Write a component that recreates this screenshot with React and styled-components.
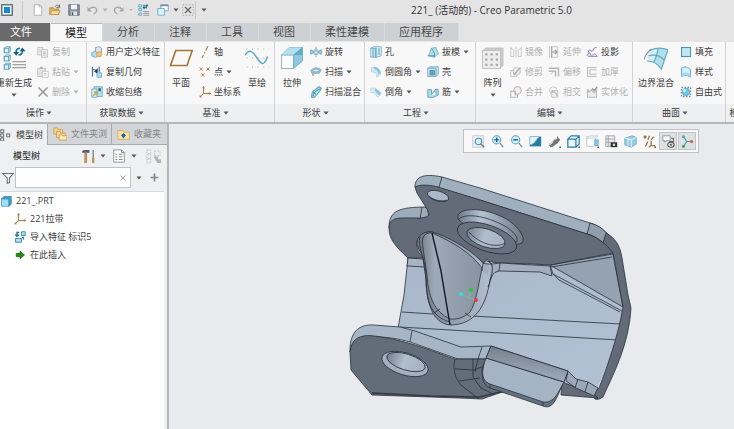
import React from 'react';
import styled, { createGlobalStyle, css } from 'styled-components';

const Global = createGlobalStyle`
  * { box-sizing: border-box; }
  html, body { margin: 0; padding: 0; overflow: hidden; }
  body, button, input {
    font-family: "Open Sans", "Noto Sans CJK SC", sans-serif;
    font-size: 9px;
    line-height: 12px;
    color: #3c3c3c;
  }
  button { border: 0; margin: 0; padding: 0; background: none; white-space: nowrap; }
  h1, h2, ul { margin: 0; padding: 0; font-weight: normal; }
`;

const Page = styled.div`
  height: 100vh;
  display: flex;
  flex-direction: column;
  overflow: hidden;
  background: #e4e4e4;
`;

const TitleBar = styled.header`
  display: flex;
  align-items: center;
  height: 23px;
  padding-bottom: 4px;
  flex-shrink: 0;
`;
const QuickAccess = styled.div`
  display: flex;
  align-items: center;
  width: 212px;
`;
const QuickButton = styled.button`
  width: ${(p) => p.$w || 18}px;
  height: 18px;
  flex-shrink: 0;
  display: flex;
  align-items: center;
  justify-content: center;
`;
const Separator = styled.span`
  width: 1px;
  height: 18px;
  background: #c6c6c6;
`;
const Title = styled.h1`
  flex: 1;
  padding-left: 37px;
  text-align: center;
  font-size: 10px;
  line-height: 16px;
  color: #333;
`;

const TabRow = styled.nav`
  display: flex;
  height: 18px;
  flex-shrink: 0;
`;
const RibbonTab = styled.button`
  font-size: 11px;
  line-height: 16px;
  padding: 0 15px 0 14px;
  color: #484848;
  background: #ced1d4;
  border-right: 1px solid #dadcde;
  ${(p) => p.$kind === 'file' && css`
    color: #fff;
    background: #6a6a6a;
    padding: 0 18px 0 10px;
  `}
  ${(p) => p.$kind === 'active' && css`
    color: #222;
    background: #f8f8f8;
    border-top: 1px solid #bbb;
  `}
`;

const Ribbon = styled.div`
  display: flex;
  height: 83px;
  flex-shrink: 0;
  background: #f8f8f8;
  border-bottom: 2px solid #b5b6b8;
`;
const Group = styled.section`
  width: ${(p) => p.$w}px;
  flex-shrink: 0;
  display: flex;
  flex-direction: column;
  border-right: 1px solid #d2d3d4;
  border-top: 1px solid #e6e6e6;
`;
const GroupBody = styled.div`
  flex: 1;
  display: flex;
  padding: 0 0 0 ${(p) => p.$pad}px;
`;
const GroupName = styled.button`
  height: 18px;
  width: 100%;
  padding-right: 8px;
  display: flex;
  align-items: center;
  justify-content: center;
  gap: 2px;
  background: #eeeff0;
`;
const BigButton = styled.button`
  width: ${(p) => p.$w}px;
  padding-top: 4px;
  display: flex;
  flex-direction: column;
  align-items: center;
  gap: 4px;
  svg { flex-shrink: 0; }
`;
const BigLabel = styled.span`
  padding-top: 3px;
`;
const Column = styled.div`
  width: ${(p) => p.$w}px;
  display: flex;
  flex-direction: column;
`;
const SmallButton = styled.button`
  height: 20px;
  display: flex;
  align-items: center;
  gap: 3px;
  color: ${(p) => (p.disabled ? '#b0b0b0' : '#3c3c3c')};
  svg { flex-shrink: 0; }
`;

const Workspace = styled.main`
  flex: 1;
  min-height: 0;
  display: flex;
`;
const Sidebar = styled.aside`
  width: 169px;
  flex-shrink: 0;
  display: flex;
  flex-direction: column;
  background: #eef0f2;
  border-right: 2px solid #b2b4b8;
`;
const PanelTabs = styled.div`
  display: flex;
  height: 21px;
`;
const PanelTab = styled.button`
  width: ${(p) => p.$w}px;
  display: flex;
  align-items: center;
  gap: 4px;
  padding-left: ${(p) => (p.$active ? 0 : 5)}px;
  overflow: hidden;
  color: ${(p) => (p.$active ? '#3c3c3c' : '#808387')};
  background: ${(p) => (p.$active ? '#eef0f2' : '#d3d5d8')};
  border: solid #a8aaad;
  border-width: ${(p) => (p.$active ? '0' : '0 0 1px 1px')};
  svg { flex-shrink: 0; }
`;
const PanelHeader = styled.div`
  display: flex;
  align-items: center;
  height: 22px;
  padding-left: 13px;
`;
const PanelTitle = styled.h2`
  width: 66px;
  font-size: 9px;
  line-height: 12px;
  font-weight: 500;
`;
const ToolButton = styled.button`
  width: ${(p) => p.$w}px;
  height: 20px;
  flex-shrink: 0;
  display: flex;
  align-items: center;
  justify-content: center;
`;
const FilterRow = styled.div`
  display: flex;
  align-items: center;
  height: 21px;
`;
const FilterBox = styled.label`
  width: 116px;
  height: 21px;
  display: flex;
  align-items: center;
  background: #fff;
  border: 1px solid #bfc1c4;
`;
const FilterInput = styled.input`
  flex: 1;
  width: 100%;
  min-width: 0;
  padding: 0 4px;
  border: 0;
  outline: 0;
  background: transparent;
`;
const Tree = styled.ul`
  flex: 1;
  margin-top: 3px;
  margin-right: 3px;
  list-style: none;
  background: #fff;
  border-top: 1px solid #d7d9dc;
`;
const TreeItem = styled.li`
  height: 18px;
  padding-left: ${(p) => (p.$child ? 14 : 0)}px;
`;
const TreeButton = styled.button`
  height: 17px;
  display: flex;
  align-items: center;
  gap: 4px;
`;

const Viewport = styled.section`
  flex: 1;
  min-width: 0;
  display: flex;
  flex-direction: column;
  background: #e8eaed;
`;
const ViewToolbar = styled.div`
  align-self: flex-end;
  display: flex;
  align-items: center;
  gap: 1px;
  height: 24px;
  margin: 5px 35px 1px 0;
  padding: 0 2px 0 5px;
  background: #f8f8f9;
  border: 1px solid #bfc1c6;
`;
const ViewButton = styled.button`
  width: 18px;
  height: 18px;
  display: flex;
  align-items: center;
  justify-content: center;
  border: 1px solid ${(p) => (p.$on ? '#c2c4c8' : 'transparent')};
  background: ${(p) => (p.$on ? '#dfe0e2' : 'transparent')};
`;
const ModelSvg = styled.svg`
  display: block;
  width: 100%;
  height: auto;
`;

const B = '#5ba3c0';
const L = '#b5deeb';
const G = '#b8b8b8';
const O = '#ad7d42';
const dot = <path d="M14 14h3v3h-3z" fill="#555" />;

/* Icon artwork, drawn on a 16-unit grid */
const art = {
  app: <><rect x="1" y="1" width="14" height="14" fill="#eef3f7" stroke="#4c5c6c" strokeWidth="1.6" /><rect x="4" y="4" width="8" height="8" fill="#1689d4" /></>,
  page: <><path d="M3 1h7l3 3v11H3z" fill="#fff" stroke="#9aa0a5" /><path d="M10 1v3h3" stroke="#9aa0a5" /></>,
  open: <><path d="M1 14V5h5l1 2h6v7z" fill="#e2b45f" stroke="#a98238" /><path d="M1 14l3-5h11l-3 5z" fill="#f7dc9a" stroke="#b98f42" /><path d="M8 4c1-3 4-3 5-1l1-2v4h-4l2-1" stroke="#555" /></>,
  save: <><path d="M1 1h14v14H1z" fill="#8b939e" stroke="#59616b" /><path d="M4 1h8v6H4z" fill="#f3f5f7" /><path d="M4 10h8v5H4z" fill="#dfe3e7" /><path d="M6 11v4" stroke="#555" strokeWidth="2" /></>,
  undo: <><path d="M4 7c5-5 11-2 10 2 0 2-2 4-4 4" stroke="#a8a8a8" strokeWidth="1.800" /><path d="M2 4v6h6z" fill="#a8a8a8" /></>,
  redo: <><path d="M12 7C7 2 1 5 2 9c0 2 2 4 4 4" stroke="#a8a8a8" strokeWidth="1.800" /><path d="M14 4v6H8z" fill="#a8a8a8" /></>,
  regenSmall: <><path d="M1 1h4v3H1zM1 6h4v3H1zM1 12h4v3H1z" fill={L} stroke={B} /><path d="M7 10h8M7 12.500h8M7 15h8" stroke="#888" /><path d="M8 5V1M11 2v4" stroke="#176d96" strokeWidth="1.500" /><path d="M6 4h5L8 7zM9 3h5l-2-3z" fill="#176d96" /></>,
  windows: <><path d="M5 1h10v8H5z" fill="#fff" stroke="#6f8799" /><path d="M5 1h10v2H5z" fill="#6497b5" /><path d="M1 6h9v9H1z" fill="#dcf2fa" stroke={B} /></>,
  close: <><rect x="1" y="1" width="14" height="14" stroke="#999" strokeDasharray="2 2" /><path d="M4 4l8 8M12 4l-8 8" stroke="#666" strokeWidth="1.800" /></>,
  copy: <><path d="M1 2h7v10H1z" fill="#eee" stroke={G} /><path d="M6 5h8v10H6z" fill="#eee" stroke={G} /><path d="M8 8h4M8 10h4M8 12h4M3 5h2M3 8h2" stroke={G} /></>,
  paste: <><path d="M1 3h10v11H1z" fill="#e4e4e4" stroke={G} /><path d="M4 1h4v3H4z" fill={G} /><path d="M7 7h8v8H7z" fill="#fff" stroke={G} /><path d="M9 10h4M9 12h4" stroke={G} /></>,
  del: <path d="M2 2l12 12M14 2L2 14" stroke="#9a9a9a" strokeWidth="2.200" />,
  udf: <><path d="M6 2l5-1 3 2v6l-5 2-3-3z" fill="#dfe4ef" stroke="#8792b0" /><path d="M1 9l4-2 4 2v5l-4 1-4-2z" fill={L} stroke={B} /><circle cx="11" cy="11" r="3.500" fill="#ecc878" stroke="#c9a050" /></>,
  copyGeom: <><path d="M2 1v13M1 5h5M11 1v7" stroke="#3a7b9c" strokeWidth="1.600" /><path d="M4 7l5-4v8z" fill="#345" /><path d="M8 9h6v6H8z" fill={L} stroke={B} /></>,
  shrink: <><path d="M4 1h11v13H4z" fill={L} stroke={B} /><path d="M1 4h7v11H1z" fill="#d6eff6" stroke={B} /><path d="M10 3h3v4h-3z" fill="#205d7a" /><path d="M3 13l5-5M4 8h4v4" stroke="#c2a04c" strokeWidth="1.800" /></>,
  axis: <path d="M12 0L9 6M8 8L7 10M6 12l-2 4" stroke={O} strokeWidth="1.500" />,
  points: <path d="M1 2l4 4M5 2L1 6M10 2l4 4M14 2l-4 4M3 10l4 4M7 10l-4 4" stroke={O} strokeWidth="1.300" />,
  csys: <><path d="M6 1v9h10M6 10l-5 5" stroke={O} strokeWidth="1.400" /><path d="M4 3l2-3 2 3M13 8l3 2-3 2M1 12v3h3" fill={O} /></>,
  revolve: <><path d="M8 1v14" stroke="#777" strokeDasharray="3 1" /><path d="M1 5l5 3-5 3zM15 5l-5 3 5 3z" fill={L} stroke={B} strokeWidth="1.300" /><ellipse cx="8" cy="8" rx="3" ry="4" stroke={B} /></>,
  sweep: <><path d="M1 6c4-5 11-4 14-1l-3 5c-4-1-8 0-8 3z" fill="#a9bfcc" stroke="#83a0b0" /><ellipse cx="8" cy="6" rx="4" ry="2" fill="#d4edf5" stroke={B} /></>,
  blend: <><path d="M2 15l1-7L12 1l3 2-2 4-7 8z" fill={L} stroke={B} strokeWidth="1.400" /><path d="M4 14c0-6 6-9 10-10M4 8l4 3" stroke="#3d8bad" strokeWidth="1.300" /></>,
  hole: <><path d="M1 3h8v12H1zM1 3l4-2h10v12l-6 2" fill="#e7f5fa" stroke={B} /><path d="M4 3v12M7 3v12M12 3v9" stroke={B} strokeWidth="1.500" /></>,
  round: <><path d="M2 2c8-1 13 4 12 9l-5 4c1-5-2-7-7-7z" fill="#d2ebf4" stroke="#b7ced8" /><path d="M5 1c5 0 9 4 9 8l-3 3c0-5-3-8-6-8z" fill="#8bc6dc" /></>,
  chamfer: <><path d="M1 3h6l8 7-5 5-4-6H1z" fill="#d8eff6" stroke="#b7ced8" /><path d="M7 3l8 6-3 4-6-7z" fill="#8bc6dc" /></>,
  draft: <><path d="M2 13L6 3l6-1 3 8-5 5z" fill={L} stroke={B} /><path d="M6 3l4 7v5M1 13h9" stroke="#4d9aba" strokeWidth="1.300" /></>,
  shell: <><path d="M1 3h11v11H1zM1 3l3-2h11v10l-3 3" fill="#c4e2ed" stroke={B} /><path d="M4 6h6v6H4z" fill="#6f9fb4" stroke="#5a8aa0" /></>,
  rib: <><path d="M1 5h5v6l6-7 3 1v7l-6 3H1z" fill={L} stroke={B} strokeWidth="1.200" /><path d="M6 11l6-5v7" fill="#eaf8fc" stroke={B} /></>,
  mirror: <><path d="M1 2l4 4v8H1zM15 2l-4 4v8h4z" stroke={G} /><path d="M8 1v14" stroke={G} /></>,
  extend: <><path d="M2 1h11v14H2z" stroke={G} /><path d="M5 1v14M5 8h7M9 5l3 3-3 3" stroke="#999" strokeWidth="1.500" /></>,
  project: <><path d="M3 9c2-9 4 1 6-3s3-4 5-4" stroke="#73649c" strokeWidth="1.300" /><path d="M1 12l4-3 2 4 5-3 3 4H3z" fill="#e6e4f0" stroke="#8579aa" /></>,
  trim: <><path d="M1 6h8v8H1z" stroke={G} /><circle cx="9" cy="7" r="5" fill="#eee" stroke={G} /><path d="M5 12L14 2" stroke="#aaa" strokeWidth="1.500" /></>,
  offset: <><path d="M1 3h13v11M1 7h9v7" stroke={G} strokeWidth="2" /><path d="M4 11l5-5" stroke={G} /></>,
  thicken: <path d="M14 2H2v12h12M14 5H5v6h9" stroke={G} strokeWidth="1.300" />,
  merge: <><circle cx="10" cy="6" r="5" fill="#eee" stroke={G} strokeWidth="1.500" /><path d="M1 7h6v5h3v3H1z" stroke={G} strokeWidth="1.500" /></>,
  intersect: <><circle cx="7" cy="6" r="5" stroke={G} /><path d="M5 6h8v9H5z" fill="#eee" stroke={G} /><path d="M5 8c6-1 6 3 7 5" stroke="#999" strokeWidth="1.300" /></>,
  solidify: <><path d="M2 4v11h12V5l-3 4-4-4-3 3z" fill="#eee" stroke={G} strokeWidth="1.500" /><path d="M8 3l3 3 4-5" stroke="#999" strokeWidth="1.800" /></>,
  fill: <rect x="2" y="2" width="12" height="12" fill="#bfe8f5" stroke="#4a93b1" strokeWidth="1.400" />,
  style: <><path d="M2 3c4-3 9-2 12 2v10c-4-3-8-3-12-1z" fill="#d2eff8" stroke={B} strokeWidth="1.200" /><path d="M2 14c3-2 8-2 12 1v-4C9 8 6 8 2 10z" fill="#a3d8ea" /></>,
  freestyle: <><path d="M2 2h12v12H2z" stroke="#6b8999" strokeDasharray="2 2" strokeWidth="1.800" /><circle cx="8" cy="8" r="5" fill="#70c8e5" stroke={B} /><circle cx="6" cy="6" r="2" fill="#d9f5fc" /></>,
  treeIcon: <path d="M1 1h4v4H1zM1 6.500h4v4H1zM1 12h4v4H1zM9 6.500h4v4H9z" stroke="#666" strokeWidth="1.300" />,
  folders: <><path d="M1 8V1h4l1 2h5v5z" fill="#f7d890" stroke="#c79d53" /><path d="M4 12V5h4l1 2h5v5z" fill="#f7d890" stroke="#c79d53" /><path d="M7 15V9h3l1 1h5v5z" fill="#fbe7b7" stroke="#c79d53" /></>,
  favorites: <><path d="M1 14V3h6l1 2h7v9z" fill="#fbe4aa" stroke="#d1a959" /><path d="M8 6l3 3-3 4-3-4z" fill="#275f9f" /></>,
  tools: <><path d="M5 4v11" stroke="#c09255" strokeWidth="3" /><path d="M1 4c0-2 1-3 3-3h5v3z" fill="#58616a" /><path d="M13 9v6" stroke="#c09255" strokeWidth="2.500" /><path d="M13 1v8" stroke="#7d868e" strokeWidth="1.500" /></>,
  list: <><path d="M2 1h9l3 3v11H2z" fill="#fff" stroke="#8b8b8b" /><path d="M4 6h2M8 6h4M4 9h2M8 9h4M4 12h2M8 12h4M11 1v3h3" stroke="#777" /></>,
  select: <><path d="M1 1h4v4H1zM1 6h4v4H1zM1 11h4v4H1zM9 2h6v5H9z" fill="#eee" stroke="#c4c4c4" strokeDasharray="2 1" /><path d="M8 8h5v3h3v4h-4z" fill="#b2b2b2" /></>,
  funnel: <path d="M1 2h14l-5 6v6l-3 1V8z" fill="#f7f7f7" stroke="#68717a" strokeWidth="1.400" />,
  part: <><path d="M2 5h10v10H2z" fill="#a6dcf3" stroke="#3d99bf" /><path d="M2 5l3-3h10v10l-3 3V5z" fill="#41a4cf" stroke="#2b84aa" /></>,
  importF: <><path d="M2 10h8v5H2zM10 1h5v5h-5z" fill={L} stroke="#3c93b8" strokeWidth="1.300" /><path d="M7 2H4v4" stroke="#286d91" strokeWidth="1.800" /><path d="M1 5h6L4 8zM10 8h3v4" fill="#286d91" stroke="#286d91" strokeWidth=".6" /></>,
  insert: <path d="M3 6h5V3l6 5-6 5v-3H3z" fill="#268b13" stroke="#16640c" />,
  refit: <><rect x="1" y="1" width="13" height="14" fill="#eef4f7" stroke="#b9c1c7" /><circle cx="8" cy="8" r="4" fill="#d8f1fa" stroke="#4a8bb0" strokeWidth="1.400" /><path d="M11 11l4 4" stroke="#6d7c89" strokeWidth="1.800" /></>,
  zoomIn: <><circle cx="7" cy="6" r="5" fill="#d9f2fa" stroke="#5d9bc0" strokeWidth="1.300" /><path d="M7 3v6M4 6h6" stroke="#14649a" strokeWidth="1.800" /><path d="M11 10l4 5" stroke="#8d98a0" strokeWidth="1.800" /></>,
  zoomOut: <><circle cx="7" cy="6" r="5" fill="#d9f2fa" stroke="#5d9bc0" strokeWidth="1.300" /><path d="M4 6h6" stroke="#14649a" strokeWidth="1.800" /><path d="M11 10l4 5" stroke="#8d98a0" strokeWidth="1.800" /></>,
  repaint: <><path d="M1 2h14v12H1z" fill="#277d9c" /><path d="M1 2h12C9 4 8 11 1 12z" fill="#e3f4fa" stroke="#8cb9c9" /></>,
  shade: <><path d="M1 12c6 1 4-7 10-7V1l4 5-4 5c-3 0-3 4-8 4z" fill="#777" /><path d="M1 11c5 0 4-6 9-6" stroke="#bbb" />{dot}</>,
  cube: <><path d="M1 5h10v10H1z" fill="#e9f8fd" /><path d="M1 5h10v10H1zM1 5l4-4h10v10l-4 4M11 5l4-4" stroke="#267ea5" strokeWidth="1.500" />{dot}</>,
  annotation: <><path d="M1 2h10v12H1z" fill="#fff" stroke="#b6c3c9" /><path d="M1 4l3-3h11l-3 3z" fill="#e6f2f6" stroke="#b6c3c9" strokeWidth=".7" /><path d="M11 6h4v7h-4z" fill="#90cce2" stroke={B} />{dot}</>,
  camera: <><path d="M1 1h11v13H1zM1 5h11M1 9h11M4 1v13" stroke="#999" fill="#eee" /><path d="M7 9h8v6H7z" fill="#333" /><circle cx="11" cy="12" r="1.500" fill="#ddd" /></>,
  perspective: <><path d="M1 4l9-3 5 2v8l-6 4-8-3z" fill="#9bcde0" stroke="#61a5bd" /><path d="M1 4l8 2 6-3M9 6v9M5 3v10" stroke="#e9f8fb" /></>,
  datums: <><path d="M1 1l3 3M4 1L1 4M8 1L6 6M13 2l-3 4M6 8l-3 6M10 7v6h5M10 13l-3 2" stroke="#9b7445" strokeWidth="1.600" />{dot}</>,
  notes: <><path d="M1 1h9v6H5L3 9V7H1z" fill="#fff" stroke="#888" /><path d="M11 4h3v4H9" stroke="#666" strokeWidth="1.300" /><ellipse cx="11" cy="12" rx="4" ry="3" stroke="#555" strokeWidth="1.300" /><circle cx="11" cy="12" r="1.200" fill="#555" /></>,
  spin: <><path d="M3 2l4 6-4 6M7 8h7" stroke="#48a1a8" strokeWidth="1.400" /><circle cx="3" cy="2" r="1.800" fill="#58a1b7" /><circle cx="3" cy="14" r="1.800" fill="#3a9d56" /><circle cx="13" cy="8" r="2" fill="#cc6258" /></>,
  plus: <path d="M8 1v14M1 8h14" stroke="#888" strokeWidth="3" />,
  x: <path d="M3 3l10 10M13 3L3 13" stroke="#888" strokeWidth="1.600" />,
  bigRegen: <><path d="M1.500 1.500h3v3h-3zM1.500 7h3v3h-3zM1.500 12.500h3v3h-3z" fill="#e1f3f9" stroke={B} strokeWidth=".8" /><path d="M4.500 1.500l1-1v3l-1 1M4.500 7l1-1v3l-1 1M4.500 12.500l1-1v3l-1 1M1.500 1.500l1-1h3M1.500 7l1-1h3M1.500 12.500l1-1h3" stroke={B} strokeWidth=".6" /><path d="M7 10.500h9M7 12.500h9M7 14.500h9" stroke="#888" strokeWidth=".7" /><path d="M9.500 5c-.5-2 .5-3.500 2.500-3.500M13.500 2.500c.5 2-.5 3.500-2.500 3.500" stroke="#176d91" strokeWidth="1.100" /><path d="M7.500 4h4l-2 2.500zM11.700 3.500h4L13.500 1z" fill="#175f80" /></>,
  plane: <path d="M4.500 3h11L12 13H1z" stroke="#a47538" strokeWidth="1.100" />,
  sketch: <><path d="M1 2h15M1 8h15M1 14h15" stroke="#aaa" strokeDasharray=".7 3" strokeWidth=".8" /><path d="M0 6c3-4 5-3 8 2s5 5 7-1" stroke="#5fabca" strokeWidth="1" /></>,
  extrude: <><path d="M1 6h8v9H1z" fill="#f8fcfd" stroke="#a6b4ba" strokeWidth=".7" /><path d="M1 6l5-5h9L9 6z" fill="#b4e0ed" stroke="#8fc6d7" strokeWidth=".6" /><path d="M9 6l6-5v9l-6 5z" fill="#8cc8de" stroke="#71b0c9" strokeWidth=".6" /><path d="M9 6l6-5v5z" fill="#5badcb" /></>,
  pattern: <><path d="M1 3l2-2h12v12l-2 2H1z" fill="#c6c7c9" /><path d="M1 3h12v12H1z" fill="#ededee" stroke="#c4c4c4" strokeWidth=".7" />{[5.5, 9, 12.5].map((y) => [3.5, 7, 10.5].map((x) => <rect key={x + '-' + y} x={x - .7} y={y - .7} width="1.500" height="1.500" fill="#a8a8a8" />))}</>,
  boundary: <><path d="M4 3C8 1 12 1 16 2.500L11.500 15.500C9.500 12 6 10 2 10 2.500 7 3 5 4 3z" fill="#d3eff7" /><path d="M9.500 1.500L16 2.500 11.500 15.500 7 11z" fill="#b0dfee" /><path d="M4 3C8 1 12 1 16 2.500L11.500 15.500C9.500 12 6 10 2 10M9.500 1.500C9 5 8 8 6.500 11M3 6.500c4-1 8 0 10.500 3" stroke="#64a9c0" strokeWidth=".8" /><path d="M0 9C1 6 2 4 5 2" stroke="#8d8d8d" strokeWidth=".7" /></>,
};

function Icon({ name, size = 12 }) {
  return <svg width={size} height={size} viewBox="0 0 16 16" fill="none" aria-hidden="true">{art[name]}</svg>;
}
function Caret({ muted }) {
  return <svg width="6" height="4" viewBox="0 0 6 4" aria-hidden="true"><path d="M.5 .5h5L3 3.500z" fill={muted ? '#b0b0b0' : '#555'} /></svg>;
}

function Small({ icon, label, menu, disabled }) {
  return (
    <SmallButton disabled={disabled}>
      <Icon name={icon} /><span>{label}</span>{menu && <Caret muted={disabled} />}
    </SmallButton>
  );
}
function Big({ icon, label, width, menu }) {
  return (
    <BigButton $w={width}>
      <Icon name={icon} size={24} /><BigLabel>{label}</BigLabel>{menu && <Caret />}
    </BigButton>
  );
}

const groups = [
  { name: '操作', w: 87, pad: 0, parts: [
    { icon: 'bigRegen', label: '重新生成', width: 28, menu: true },
    { w: 9 },
    { w: 48, items: [['copy', '复制', 0, 1], ['paste', '粘贴', 1, 1], ['del', '删除', 1, 1]] },
  ] },
  { name: '获取数据', w: 78, pad: 4, parts: [
    { w: 72, items: [['udf', '用户定义特征'], ['copyGeom', '复制几何'], ['shrink', '收缩包络']] },
  ] },
  { name: '基准', w: 110, pad: 4, parts: [
    { icon: 'plane', label: '平面', width: 24 },
    { w: 6 },
    { w: 44, items: [['axis', '轴'], ['points', '点', 1], ['csys', '坐标系']] },
    { icon: 'sketch', label: '草绘', width: 28 },
  ] },
  { name: '形状', w: 90, pad: 5, parts: [
    { icon: 'extrude', label: '拉伸', width: 24 },
    { w: 6 },
    { w: 52, items: [['revolve', '旋转'], ['sweep', '扫描', 1], ['blend', '扫描混合']] },
  ] },
  { name: '工程', w: 111, pad: 5, parts: [
    { w: 57, items: [['hole', '孔'], ['round', '倒圆角', 1], ['chamfer', '倒角', 1]] },
    { w: 48, items: [['draft', '拔模', 1], ['shell', '壳'], ['rib', '筋', 1]] },
  ] },
  { name: '编辑', w: 157, pad: 4, parts: [
    { icon: 'pattern', label: '阵列', width: 25, menu: true },
    { w: 5 },
    { w: 38, items: [['mirror', '镜像', 0, 1], ['trim', '修剪', 0, 1], ['merge', '合并', 0, 1]] },
    { w: 38, items: [['extend', '延伸', 0, 1], ['offset', '偏移', 0, 1], ['intersect', '相交', 0, 1]] },
    { w: 45, items: [['project', '投影'], ['thicken', '加厚', 0, 1], ['solidify', '实体化', 0, 1]] },
  ] },
  { name: '曲面', w: 93, pad: 5, parts: [
    { icon: 'boundary', label: '边界混合', width: 36 },
    { w: 6 },
    { w: 42, items: [['fill', '填充'], ['style', '样式'], ['freestyle', '自由式']] },
  ] },
  { name: '模型意图', w: 60, pad: 4, parts: [] },
];

const quick = [
  ['app', 13, '窗口'], ['sep', 18], ['page', 14, '新建'], ['open', 20, '打开'], ['save', 18, '保存'], ['undo', 18, '撤消'],
  ['menu-muted', 8, '撤消列表'], ['redo', 20, '重做'], ['menu-muted', 4, '重做列表'], ['regenSmall', 22, '重新生成'],
  ['windows', 16, '窗口列表'], ['menu', 10, '更多窗口'], ['close', 14, '关闭'], ['sep', 1], ['menu', 15, '自定义'],
];

const viewTools = [
  ['refit', '重新调整'], ['zoomIn', '放大'], ['zoomOut', '缩小'], ['repaint', '重画'], ['shade', '渲染选项'], ['cube', '显示样式'],
  ['annotation', '已保存方向'], ['camera', '视图管理器'], ['perspective', '透视图'], ['datums', '基准显示'], ['notes', '注释显示', true], ['spin', '旋转中心', true],
];

function Model() {
  return (
    <ModelSvg viewBox="169 154 565 275" role="img" aria-label="221_.PRT">
      <defs>
        <linearGradient id="wall" x1="0" y1="0" x2="1" y2="1"><stop stopColor="#a8b7c9" /><stop offset="1" stopColor="#b2c1d4" /></linearGradient>
        <linearGradient id="pocket"><stop stopColor="#7a8592" /><stop offset=".2" stopColor="#9daab8" /><stop offset=".45" stopColor="#96a2b0" /><stop offset="1" stopColor="#8793a0" /></linearGradient>
        <linearGradient id="lip"><stop stopColor="#6d7885" /><stop offset=".45" stopColor="#8f9cab" /><stop offset="1" stopColor="#b3c1d1" /></linearGradient>
        <linearGradient id="bore"><stop stopColor="#75818f" /><stop offset=".45" stopColor="#b0becd" /><stop offset="1" stopColor="#a3b1c0" /></linearGradient>
        <linearGradient id="bend" x1="0" y1="0" x2="-.2" y2="1"><stop stopColor="#76818e" /><stop offset="1" stopColor="#a8b8c9" /></linearGradient>
        <linearGradient id="rim"><stop stopColor="#6c7784" /><stop offset=".35" stopColor="#b4c2d1" /><stop offset="1" stopColor="#6e7a88" /></linearGradient>
      </defs>
      <g stroke="#27303b" strokeWidth=".8" strokeLinejoin="round" fill="none">
        <path d="M408 258L404 295 398 328 470 359 491 352 564 384 596 392 612 353 625 307 613 253 550 263 487 261z" fill="url(#wall)" stroke="none" />
        <path d="M408 258L404 295 398 328" />
        <path d="M402 312L433 314M471 316L621 324M400 327L618 340" />
        <path d="M550 265L613 254 623 307z" fill="#94a2b2" />
        <path d="M550 265L553 274 622 311" />
        <path d="M551 267L612 257M553 274L559 280 620 312" />
        <path d="M389 228C389 211 398 207 427 207L429 217 421 219 397 219z" fill="#9dabba" />
        <path d="M415 187C415 177 423 173 442 177L480 188 590 223C601 226 607 233 618 245L613 253 603 243C596 237 592 235 587 234L480 200 435 187z" fill="#a0afbe" />
        <path d="M590 223C601 226 605 231 608 235L603 243C596 237 592 235 587 234z" fill="#8f9dac" />
        <path d="M603 243L606 233C615 238 620 245 622 258L628 295 631 308C629 344 614 373 603 397 600 399 597 400 595 399L592 395 599 388C607 367 618 337 623 307L613 253z" fill="#626b77" />
        <path d="M415 187C420 184 431 185 438 187L480 200 587 234C598 237 607 245 613 253L550 265 533 264 500 263C491 263 489 259 483 263 473 253 453 240 432 232 424 231 416 237 417 245 418 253 420 254 423 258L408 258C395 246 389 239 389 228 390 216 398 218 421 218 431 216 430 215 427 209L417 193z" fill="#626b77" />
        <path d="M442 177L439 187M422 207L420 219" />
        <ellipse cx="438" cy="196" rx="11" ry="5" transform="rotate(16 438 196)" fill="#a9b8c7" />
        <path d="M429 196C433 200 441 202 447 200" />
        <path d="M408 258L423 259 425 267 407 266z" fill="#a6b4c4" />
        <path d="M458 219C455 207 482 207 500 216 516 222 527 238 522 243 508 249 475 236 458 219z" fill="url(#rim)" />
        <path d="M459 219C466 212 491 217 508 228 516 234 519 239 516 243" />
        <ellipse cx="487" cy="238" rx="31" ry="13" transform="rotate(19 487 238)" fill="#68727e" />
        <ellipse cx="486" cy="238" rx="20" ry="9" transform="rotate(18 486 238)" fill="url(#bore)" />
        <path d="M469 232C478 243 496 249 505 243" />
        <path d="M417 245C416 237 422 231 432 232 453 238 474 253 483 263 488 258 494 264 492 271L490 280C486 306 475 325 450 325 432 323 427 303 426 280L423 258z" fill="url(#lip)" />
        <path d="M432 233C424 232 421 238 423 248L427 275C428 295 434 312 450 319 459 320 466 316 470 312 476 303 478 287 482 268 471 253 453 242 432 233z" fill="url(#pocket)" />
        <path d="M488 259L483 263 482 271 488 275C489 268 491 264 500 263L533 265 550 266 552 276 540 272 500 271C493 271 492 275 491 280z" fill="#a0aebd" stroke="none" />
        <path d="M488 259L483 263 482 271M483 263C490 265 492 264 500 263L533 265 550 266 552 276 540 272 500 271C491 271 491 281 488 287M487 261C493 262 494 270 490 280M500 263L499 271" />
        <path d="M432 233L441 271 450 325" stroke="#111923" strokeWidth="1.400" />
        <path d="M420 237C417 246 426 259 426 278 426 303 432 317 450 322M434 313L440 309M465 313L471 317" />
        <path d="M350 350C350 332 359 324 374 325L400 327 415 331 461 347 491 346 486 359 458 359 410 342C385 335 354 333 350 352z" fill="#a7b6c7" />
        <path d="M350 352C351 339 360 334 374 336 409 340 439 354 455 359L486 359 488 385 505 391 482 399 460 398 372 395 351 370z" fill="#636c79" />
        <path d="M412 331L410 342M482 347L478 359" />
        <ellipse cx="405" cy="364" rx="24" ry="11" transform="rotate(17 405 364)" fill="#a3b0be" />
        <ellipse cx="406" cy="362" rx="20" ry="8" transform="rotate(17 406 362)" fill="url(#bore)" />
        <path d="M455 359C452 370 456 380 462 386L479 399M473 359V377L481 388 493 394M455 369L474 370 484 366M459 381L480 378M478 359L475 372" />
        <path d="M372 393L430 396 479 397 505 391" stroke="#303944" strokeWidth="1.600" />
        <path d="M562 382L594 394 598 398 561 395z" fill="#626b77" />
        <path d="M568 371L566 381 576 388 594 396 598 388 588 382 576 379z" fill="#9aa8b8" />
        <path d="M578 379L575 388M588 382L585 392" />
        <path d="M486 359L491 346 568 371 563 383 558 395C554 404 550 409 543 406L490 388C482 385 482 375 482 369z" fill="#68727e" />
        <path d="M486 358L564 382 558 393C554 400 549 403 543 402L490 384C480 380 482 369 486 358z" fill="#a4b4c4" />
        <path d="M491 346L568 371 564 382 486 358z" fill="url(#bend)" />
        <path d="M543 402V406M490 384V388" />
      </g>
      <path d="M461 294l8 4 2-8M469 298l7 2" fill="none" stroke="#79b99f" />
      <circle cx="461" cy="294" r="2" fill="#2ce5e0" /><circle cx="471" cy="290" r="2" fill="#24ca35" /><circle cx="476" cy="300" r="2" fill="#f33442" />
    </ModelSvg>
  );
}

export default function App() {
  return (
    <Page>
      <Global />
      <TitleBar>
        <QuickAccess>
          {quick.map(([name, w, label], i) => {
            if (name === 'sep') return <QuickButton as="span" $w={w} key={i}><Separator /></QuickButton>;
            return (
              <QuickButton key={i} $w={w} aria-label={label}>
                {name.startsWith('menu') ? <Caret muted={name === 'menu-muted'} /> : <Icon name={name} />}
              </QuickButton>
            );
          })}
        </QuickAccess>
        <Title>221_ (活动的) - Creo Parametric 5.0</Title>
      </TitleBar>
      <TabRow>
        <RibbonTab $kind="file">文件</RibbonTab>
        <RibbonTab $kind="active">模型</RibbonTab>
        {['分析', '注释', '工具', '视图', '柔性建模', '应用程序'].map((t) => <RibbonTab key={t}>{t}</RibbonTab>)}
      </TabRow>
      <Ribbon>
        {groups.map((g) => (
          <Group key={g.name} $w={g.w}>
            <GroupBody $pad={g.pad}>
              {g.parts.map((p, i) => (p.icon
                ? <Big key={i} {...p} />
                : (
                  <Column key={i} $w={p.w}>
                    {(p.items || []).map(([icon, label, menu, off]) => (
                      <Small key={label} icon={icon} label={label} menu={!!menu} disabled={!!off} />
                    ))}
                  </Column>
                )))}
            </GroupBody>
            <GroupName>{g.name}<Caret /></GroupName>
          </Group>
        ))}
      </Ribbon>
      <Workspace>
        <Sidebar>
          <PanelTabs>
            <PanelTab $w={47} $active><Icon name="treeIcon" />模型树</PanelTab>
            <PanelTab $w={64}><Icon name="folders" size={14} />文件夹浏</PanelTab>
            <PanelTab $w={56}><Icon name="favorites" size={13} />收藏夹</PanelTab>
          </PanelTabs>
          <PanelHeader>
            <PanelTitle>模型树</PanelTitle>
            <ToolButton $w={18} aria-label="设置"><Icon name="tools" size={15} /></ToolButton>
            <ToolButton $w={12} aria-label="设置列表"><Caret /></ToolButton>
            <ToolButton $w={20} aria-label="显示"><Icon name="list" size={14} /></ToolButton>
            <ToolButton $w={10} aria-label="显示列表"><Caret /></ToolButton>
            <ToolButton $w={28} aria-label="选择"><Icon name="select" size={15} /></ToolButton>
          </PanelHeader>
          <FilterRow>
            <ToolButton $w={15} aria-label="过滤"><Icon name="funnel" /></ToolButton>
            <FilterBox>
              <FilterInput aria-label="过滤模型树" />
              <ToolButton $w={14} aria-label="清除"><Icon name="x" size={8} /></ToolButton>
            </FilterBox>
            <ToolButton $w={15} aria-label="过滤列表"><Caret /></ToolButton>
            <ToolButton $w={16} aria-label="添加"><Icon name="plus" size={9} /></ToolButton>
          </FilterRow>
          <Tree>
            <TreeItem><TreeButton><Icon name="part" />221_.PRT</TreeButton></TreeItem>
            <TreeItem $child><TreeButton><Icon name="csys" />221拉带</TreeButton></TreeItem>
            <TreeItem $child><TreeButton><Icon name="importF" />导入特征 标识5</TreeButton></TreeItem>
            <TreeItem $child><TreeButton><Icon name="insert" />在此插入</TreeButton></TreeItem>
          </Tree>
        </Sidebar>
        <Viewport>
          <ViewToolbar>
            {viewTools.map(([name, label, on]) => (
              <ViewButton key={name} $on={on} aria-label={label}><Icon name={name} size={13} /></ViewButton>
            ))}
          </ViewToolbar>
          <Model />
        </Viewport>
      </Workspace>
    </Page>
  );
}
